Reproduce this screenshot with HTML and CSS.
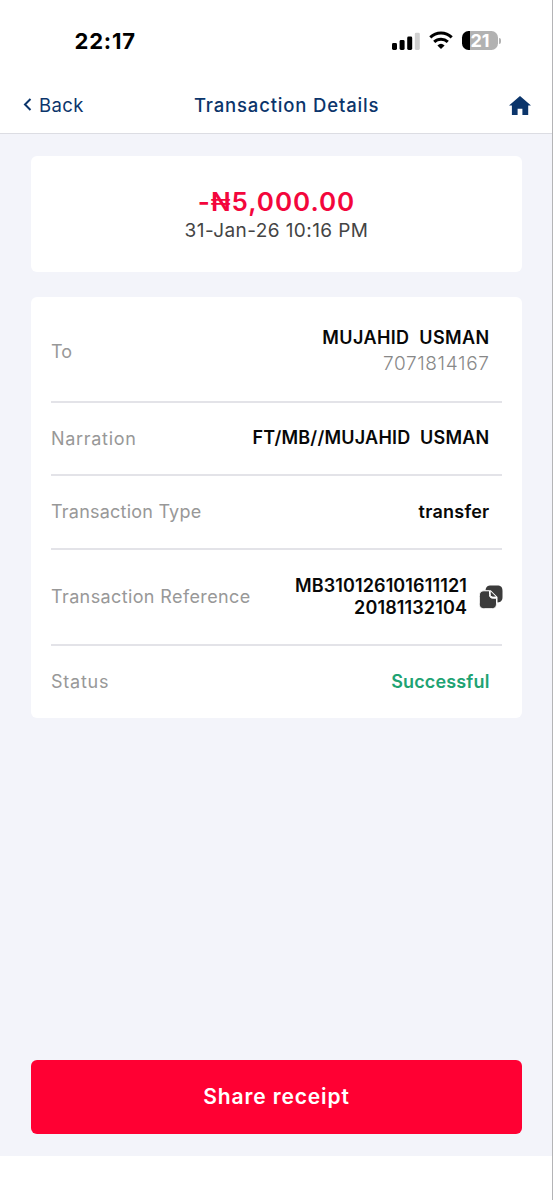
FILE: index.html
```
<!DOCTYPE html>
<html lang="en">
<head>
<meta charset="utf-8">
<title>Transaction Details</title>
<link rel="stylesheet" href="styles.css">
</head>
<body>
<div class="screen">
  <div class="status-bar">
    <span class="clock">22:17</span>
    <div class="indicators">
      <svg class="signal" width="28" height="18" viewBox="0 0 28 18">
        <rect x="0" y="11" width="5" height="7" rx="1.4"/>
        <rect x="7.6" y="8" width="5" height="10" rx="1.4"/>
        <rect x="15.2" y="4.500" width="5" height="13.500" rx="1.4"/>
        <rect x="22.800" y="0.700" width="5" height="17.300" rx="1.4" fill="#d0d0d0"/>
      </svg>
      <svg class="wifi" width="24" height="18" viewBox="0 0 24 18" fill="none" stroke="#000" stroke-width="3">
        <path d="M1.300 6.400a15.400 15.400 0 0 1 21.400 0"/>
        <path d="M5.200 10.900a9.900 9.900 0 0 1 13.600 0"/>
        <path d="M12 18l-3.600-3.600a5.400 5.400 0 0 1 7.200 0z" fill="#000" stroke="none"/>
      </svg>
      <div class="battery"><span class="battery-body">21</span><span class="battery-cap"></span></div>
    </div>
  </div>
  <header class="nav">
    <a class="back">
      <svg width="9" height="13" viewBox="0 0 9 13" fill="none" stroke="#0b356b" stroke-width="2"><path d="M7.500 1L2 6.500 7.500 12"/></svg>
      <span class="back-label">Back</span>
    </a>
    <h1 class="title">Transaction Details</h1>
    <svg class="home" width="22" height="19" viewBox="0 0 22 19"><path fill="#0b356b" d="M11 0L0 9.600h2.900V19h5.700v-6.300h4.800V19h5.800V9.600H22z"/></svg>
  </header>
  <main class="content">
    <section class="card summary">
      <div class="amount">-₦5,000.00</div>
      <div class="date">31-Jan-26 10:16 PM</div>
    </section>
    <section class="card details">
      <div class="row row-to">
        <span class="label l-to">To</span>
        <div class="value"><span class="name">MUJAHID&nbsp; USMAN</span><span class="account">7071814167</span></div>
      </div>
      <div class="row">
        <span class="label l-narration">Narration</span>
        <div class="value"><span class="narration">FT/MB//MUJAHID&nbsp; USMAN</span></div>
      </div>
      <div class="row">
        <span class="label l-type">Transaction Type</span>
        <div class="value"><span class="type">transfer</span></div>
      </div>
      <div class="row row-ref">
        <span class="label l-ref">Transaction Reference</span>
        <div class="value with-icon">
          <div class="reference"><span>MB310126101611121</span><span>20181132104</span></div>
          <svg width="24" height="24" viewBox="0 0 24 24" fill="#3b3b3b">
            <path d="M6.500 5.500C7 1.700 8.700.5 12 .5h6c4 0 5.500 1.500 5.500 5.500v6c0 3.400-1.200 5-5 5.500V12L12 5.500z"/>
            <path stroke="#fff" stroke-width="1" d="M5.500 5.800h5v3.700c0 2.600 1 3.700 3.700 3.700h3.300v5c0 4-1.500 5.500-5.500 5.500H5.800c-4 0-5.500-1.500-5.500-5.500v-6.900c0-4 1.500-5.500 5.200-5.500z"/>
            <path stroke="#fff" stroke-width="1" d="M11.200 5.800c.4 0 6.200 5.600 6.200 6.300h-2.800c-2.200 0-3.400-.9-3.400-3.200z"/>
          </svg>
        </div>
      </div>
      <div class="row row-status">
        <span class="label l-status">Status</span>
        <div class="value"><span class="success">Successful</span></div>
      </div>
    </section>
    <button class="share">Share receipt</button>
  </main>
</div>
</body>
</html>
```
FILE: styles.css
```
* { box-sizing: border-box; }
body { margin: 0; background: #fff; font-family: Inter, "Noto Sans", sans-serif; }
.screen { width: 553px; height: 1200px; border-right: 1px solid #b4b4b6; display: flex; flex-direction: column; }
.status-bar { height: 76px; padding: 6px 51px 0 74.500px; display: flex; align-items: center; justify-content: space-between; }
.clock { font-size: 22px; font-weight: 700; line-height: 26px; letter-spacing: .8px; }
.indicators { display: flex; align-items: center; }
.signal { margin-top: -1px; }
.wifi { margin: -2px 0 0 9px; }
.battery { display: flex; align-items: center; margin: -1px 0 0 9px; }
.battery-body { width: 36px; height: 19px; border-radius: 6.5px; background: linear-gradient(90deg, #000 8px, #b2b2b2 8px); color: #fff; font-size: 18px; font-weight: 700; line-height: 19px; text-align: center; }
.battery-cap { width: 2px; height: 6px; margin-left: 1px; border-radius: 0 2px 2px 0; background: #b2b2b2; }
.nav { height: 58px; padding: 0 21px 0 23px; display: grid; grid-template-columns: 171px auto 1fr; align-items: center; border-bottom: 1px solid #dcdde3; color: #0b356b; }
.back { display: flex; align-items: center; gap: 7px; font-size: 18.5px; letter-spacing: .4px; }
.title { margin: 0; font-size: 18.5px; font-weight: 500; letter-spacing: .83px; white-space: nowrap; }
.home { justify-self: end; margin-top: 2px; }
.content { height: 1022px; padding: 22px 30px 22px 31px; background: #f3f4fa; display: flex; flex-direction: column; }
.card { background: #fff; border-radius: 6px; }
.summary { height: 116px; padding-top: 32px; display: flex; flex-direction: column; align-items: center; white-space: nowrap; }
.amount { color: #f3063c; font-size: 26px; line-height: 28px; font-weight: 600; letter-spacing: .97px; }
.date { color: #444; font-size: 19px; line-height: 29px; letter-spacing: .42px; }
.details { height: 421px; margin-top: 25px; padding: 5px 20px 0; }
.row { height: 73.500px; display: flex; align-items: center; justify-content: space-between; border-bottom: 2px solid #e3e3e8; white-space: nowrap; }
.row-to { height: 100.500px; }
.row-ref { height: 96px; }
.row-status { height: 72px; border-bottom: 0; }
.label { color: #989898; font-size: 18px; }
.l-narration { letter-spacing: .7px; }
.l-type { letter-spacing: .22px; }
.l-ref { letter-spacing: .38px; }
.l-status { letter-spacing: .75px; }
.value { padding-right: 12.500px; display: flex; flex-direction: column; align-items: flex-end; color: #080808; font-size: 18px; font-weight: 600; line-height: 22px; }
.row-to .value { padding-top: 2px; }
.name { letter-spacing: .38px; }
.narration { letter-spacing: .23px; }
.type { letter-spacing: .25px; }
.with-icon { padding-right: 0; margin-right: -1px; flex-direction: row; align-items: center; gap: 12px; }
.reference { display: flex; flex-direction: column; align-items: flex-end; letter-spacing: .12px; }
.account { color: #888; font-size: 19px; font-weight: 300; line-height: 29px; letter-spacing: .65px; }
.success { color: #1fa373; letter-spacing: .15px; }
.share { height: 74px; margin-top: auto; padding: 0 0 2px; border: 0; border-radius: 6px; background: #ff0033; color: #fff; font: 600 21px Inter, sans-serif; letter-spacing: .88px; }
```
